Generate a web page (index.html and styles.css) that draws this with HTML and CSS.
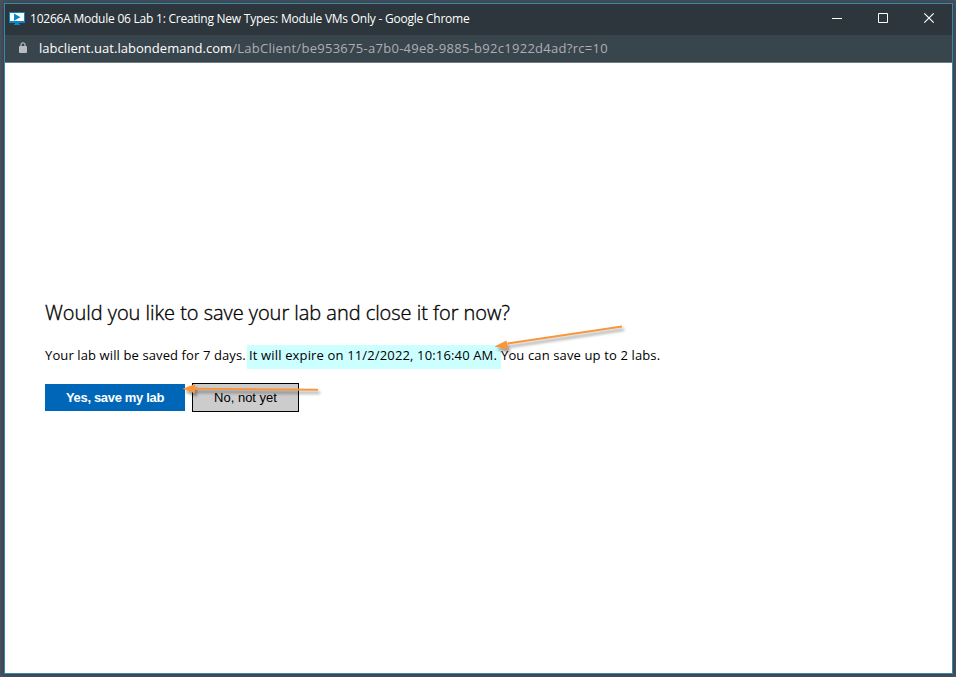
FILE: index.html
```
<!DOCTYPE html>
<html lang="en">
<head>
<meta charset="utf-8">
<title>10266A Module 06 Lab 1: Creating New Types: Module VMs Only</title>
<link rel="stylesheet" href="styles.css">
</head>
<body>
<div class="window">
  <header class="titlebar">
    <svg class="app-icon" width="16" height="14" viewBox="0 0 16 14">
      <path fill="#0b87c9" d="M0 0h16v11h-6v1h1v1H5v-1h1v-1H0z"/>
      <path fill="#fff" d="M1 1h14v8H1z"/>
      <path fill="#0b87c9" d="M5 1.5l6.5 3.7L5 8.8z"/>
    </svg>
    <span class="title">10266A Module 06 Lab 1: Creating New Types: Module VMs Only - Google Chrome</span>
    <div class="controls">
      <svg width="46" height="30" viewBox="0 0 46 30"><path stroke="#fff" d="M18 14.5h10"/></svg>
      <svg width="46" height="30" viewBox="0 0 46 30"><path fill="none" stroke="#fff" d="M18.5 9.5h9v9h-9z"/></svg>
      <svg width="46" height="30" viewBox="0 0 46 30"><path stroke="#fff" stroke-width="1.2" d="M18.3 9.3l9.4 9.4M27.7 9.3l-9.4 9.4"/></svg>
    </div>
  </header>
  <div class="addressbar">
    <svg class="lock" width="8" height="11" viewBox="0 0 8 11">
      <path fill="none" stroke="#b9bdc0" stroke-width="1.2" d="M2 5V2.8a2 2 0 0 1 4 0V5"/>
      <rect y="4" width="8" height="7" rx="1" fill="#b9bdc0"/>
    </svg>
    <span class="url"><span class="host">labclient.uat.labondemand.com</span><span class="path">/LabClient/be953675-a7b0-49e8-9885-b92c1922d4ad?rc=10</span></span>
  </div>
  <main class="page">
    <h1 class="question">Would you like to save your lab and close it for now?</h1>
    <p class="details"><span class="before">Your lab will be saved for 7 days.</span><span class="expiry">It will expire on 11/2/2022, 10:16:40 AM.</span><span class="after">You can save up to 2 labs.</span></p>
    <div class="actions">
      <button class="btn primary">Yes, save my lab</button>
      <button class="btn secondary">No, not yet</button>
    </div>
  </main>
</div>
<svg class="arrows" width="956" height="677" viewBox="0 0 956 677">
  <g class="arrow">
    <path d="M622 326.5L507.500 343.500" />
    <path class="head" d="M494.500 346.500l12-6 1.500 9z"/>
  </g>
  <g class="arrow">
    <path d="M318 389.700L195 388.800"/>
    <path class="head" d="M182.500 388.700l12.500-4.700v9.400z"/>
  </g>
</svg>
</body>
</html>
```
FILE: styles.css
```
* { box-sizing: border-box; }
body {
  margin: 0;
  height: 677px;
  padding: 3px 3px 3px 4px;
  overflow: hidden;
  background: #485260;
  font-family: "Open Sans", "Noto Sans", sans-serif;
}
.window {
  width: 949px;
  height: 671px;
  display: flex;
  flex-direction: column;
  border: 1px solid #348aa7;
  background: #fff;
  box-shadow: 0 0 5px rgba(0, 0, 0, .35);
}
.titlebar {
  height: 31px;
  flex: none;
  display: flex;
  align-items: center;
  padding-left: 4px;
  background: #2c363c;
  color: #fff;
}
.app-icon { margin-top: -1px; }
.title {
  margin-left: 5px;
  margin-top: -1px;
  font: 12px/16px "Open Sans", sans-serif;
  white-space: nowrap;
  letter-spacing: -.23px;
}
.controls { display: flex; margin-left: auto; align-self: flex-start; }
.addressbar {
  height: 28px;
  flex: none;
  display: flex;
  align-items: center;
  padding-left: 14px;
  background: #39454c;
  border-bottom: 1px solid #6f7c84;
}
.lock { margin-top: -2px; }
.url { margin: -2px 0 0 12px; font-size: 13px; line-height: 18px; white-space: nowrap; }
.host { color: #fff; letter-spacing: .04px; }
.path { color: #a9b0b5; letter-spacing: .28px; }
.page { flex: 1; padding: 236px 40px 0; color: #000; }
.question {
  margin: 0;
  font-size: 20px;
  line-height: 28px;
  font-weight: 300;
  letter-spacing: -.04px;
  -webkit-text-stroke: .35px #000;
  white-space: nowrap;
}
.details {
  display: flex;
  margin: 18px 0 0;
  height: 24px;
  font-size: 13px;
  line-height: 21px;
  letter-spacing: .11px;
  white-space: nowrap;
}
.before { width: 202px; }
.expiry { width: 254px; padding-left: 2px; background: #cff; letter-spacing: .15px; }
.after { letter-spacing: .13px; }
.actions { display: flex; align-items: center; gap: 7px; margin-top: 14px; }
.btn {
  padding: 0;
  border: 0;
  font-family: "Liberation Sans", Arial, sans-serif;
  font-size: 13px;
}
.primary {
  width: 140px;
  height: 27px;
  background: #0067b8;
  color: #fff;
  font-weight: 700;
  letter-spacing: -.33px;
}
.secondary { width: 107px; height: 29px; background: #ccc; color: #000; border: 1px solid #000; }
.arrows { position: absolute; left: 0; top: 0; pointer-events: none; }
.arrow { stroke: #f9963b; stroke-width: 2; fill: none; filter: drop-shadow(2px 3px 1.5px rgba(0, 0, 0, .4)); }
.head { fill: #f9963b; stroke: none; }
```
